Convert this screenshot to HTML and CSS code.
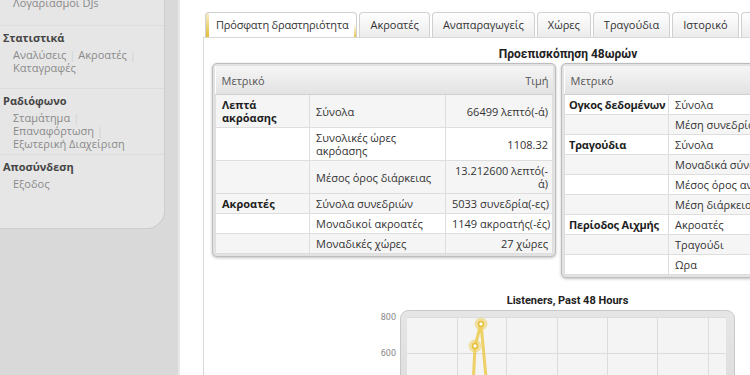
FILE: index.html
```html
<!DOCTYPE html>
<html lang="el">
<head>
	<meta charset="UTF-8">
	<title>Στατιστικά</title>
	<link rel="stylesheet" href="styles.css">
</head>
<body>

	<div class="layout">
		<aside class="sidebar">
			<div class="nav">
				<div class="nav-group spaced first">
					<div class="nav-links"><a>Λογαριασμοί DJs</a></div>
				</div>
				<div class="nav-group spaced">
					<h4>Στατιστικά</h4>
					<div class="nav-links">
						<a>Αναλύσεις</a><span class="sep">|</span><a>Ακροατές</a><span class="sep">|</span><br>
						<a>Καταγραφές</a>
					</div>
				</div>
				<div class="nav-group">
					<h4>Ραδιόφωνο</h4>
					<div class="nav-links">
						<a>Σταμάτημα</a><span class="sep">|</span><br>
						<a>Επαναφόρτωση</a><span class="sep">|</span><br>
						<a>Εξωτερική Διαχείριση</a>
					</div>
				</div>
				<div class="nav-group">
					<h4>Αποσύνδεση</h4>
					<div class="nav-links"><a>Εξοδος</a></div>
				</div>
			</div>
		</aside>

		<main class="main">
			<ul class="tabs">
				<li class="tab active">Πρόσφατη δραστηριότητα</li>
				<li class="tab">Ακροατές</li>
				<li class="tab">Αναπαραγωγείς</li>
				<li class="tab">Χώρες</li>
				<li class="tab">Τραγούδια</li>
				<li class="tab">Ιστορικό</li>
				<li class="tab">Λήψεις</li>
			</ul>

			<div class="tab-panel">
				<h3 class="panel-title">Προεπισκόπηση 48ωρών</h3>

				<div class="stats">
					<div class="stat-box">
						<table>
							<colgroup><col style="width:94px"><col style="width:136px"><col></colgroup>
							<tr><th colspan="2">Μετρικό</th><th class="value">Τιμή</th></tr>
							<tr class="alt"><td class="metric">Λεπτά ακρόασης</td><td>Σύνολα</td><td class="value">66499 λεπτό(-ά)</td></tr>
							<tr><td></td><td>Συνολικές ώρες<br>ακρόασης</td><td class="value">1108.32</td></tr>
							<tr class="alt"><td></td><td>Μέσος όρος διάρκειας</td><td class="value">13.212600 λεπτό(-<br>ά)</td></tr>
							<tr class="alt"><td class="metric">Ακροατές</td><td>Σύνολα συνεδριών</td><td class="value">5033 συνεδρία(-ες)</td></tr>
							<tr><td></td><td>Μοναδικοί ακροατές</td><td class="value">1149 ακροατής(-ές)</td></tr>
							<tr class="alt"><td></td><td>Μοναδικές χώρες</td><td class="value">27 χώρες</td></tr>
						</table>
					</div>

					<div class="stat-box">
						<table class="compact">
							<colgroup><col style="width:104px"><col style="width:150px"><col></colgroup>
							<tr><th colspan="2">Μετρικό</th><th class="value">Τιμή</th></tr>
							<tr><td class="metric">Ογκος δεδομένων</td><td>Σύνολα</td><td class="value">8.41 GB</td></tr>
							<tr class="alt"><td></td><td>Μέση συνεδρία</td><td class="value">1.71 MB</td></tr>
							<tr><td class="metric">Τραγούδια</td><td>Σύνολα</td><td class="value">3120</td></tr>
							<tr class="alt"><td></td><td>Μοναδικά σύνολα</td><td class="value">812</td></tr>
							<tr><td></td><td>Μέσος όρος ανά ώρα</td><td class="value">65</td></tr>
							<tr class="alt"><td></td><td>Μέση διάρκεια</td><td class="value">3:42</td></tr>
							<tr><td class="metric">Περίοδος Αιχμής</td><td>Ακροατές</td><td class="value">763</td></tr>
							<tr class="alt"><td></td><td>Τραγούδι</td><td class="value">-</td></tr>
							<tr><td></td><td>Ωρα</td><td class="value">21:00</td></tr>
						</table>
					</div>
				</div>

				<div class="chart">
					<div class="chart-title">Listeners, Past 48 Hours</div>
					<svg width="370" height="80" viewBox="0 0 370 80">
						<defs>
							<linearGradient id="frame" x1="0" y1="0" x2="0" y2="1">
								<stop offset="0" stop-color="#e6e6e6"/>
								<stop offset="1" stop-color="#d9d9d9"/>
							</linearGradient>
						</defs>
						<rect x="25.5" y="2.5" width="334" height="120" rx="8" fill="url(#frame)" stroke="#c8c8c8"/>
						<rect x="32" y="9" width="319" height="110" fill="#f4f4f4"/>
						<g stroke="#dcdcdc" stroke-width="1">
							<line x1="32" y1="9.5" x2="351" y2="9.5"/>
							<line x1="32" y1="45.5" x2="351" y2="45.5"/>
							<line x1="82.5" y1="9" x2="82.5" y2="80"/>
							<line x1="131.5" y1="9" x2="131.5" y2="80"/>
							<line x1="182.5" y1="9" x2="182.5" y2="80"/>
							<line x1="232.5" y1="9" x2="232.5" y2="80"/>
							<line x1="282.5" y1="9" x2="282.5" y2="80"/>
							<line x1="333.5" y1="9" x2="333.5" y2="80"/>
						</g>
						<g font-family="Roboto, sans-serif" font-size="9" fill="#888" text-anchor="end">
							<text x="21" y="12">800</text>
							<text x="21" y="48">600</text>
						</g>
						<polyline points="98,80 100,38 106,16 112,80" fill="none" stroke="#ecca4c" stroke-width="3" stroke-linejoin="round" opacity="0.85"/>
						<circle cx="100" cy="38" r="6.5" fill="#eed063" opacity="0.55"/>
						<circle cx="106" cy="16" r="6.5" fill="#eed063" opacity="0.55"/>
						<circle cx="100" cy="38" r="2.5" fill="#fff" stroke="#e5bf33" stroke-width="1.5"/>
						<circle cx="106" cy="16" r="2.5" fill="#fff" stroke="#e5bf33" stroke-width="1.5"/>
					</svg>
				</div>
			</div>
		</main>
	</div>

</body>
</html>
```

FILE: styles.css
```css
body {
	margin: 0;
	font-family: "Open Sans", sans-serif;
	height: 375px;
	overflow: hidden;
	background: #fff;
}

.layout {
	display: flex;
	height: 375px;
}

/* sidebar */

.sidebar {
	width: 178px;
	flex-shrink: 0;
	background: #d9d9d9;
	border-right: 2px solid #e8e8e8;
}

.nav {
	width: 164px;
	margin-top: -8px;
	padding-bottom: 34px;
	background: #e6e6e6;
	border-right: 1px solid #cdcdcd;
	border-bottom: 1px solid #cdcdcd;
	border-bottom-right-radius: 18px;
}

.nav-group {
	padding: 4px 0 4px 3px;
	border-bottom: 1px solid #dddddd;
}

.nav-group.spaced {
	padding-bottom: 14px;
}

.nav-group.first {
	padding-bottom: 16px;
}

.nav-group:last-child {
	border-bottom: 0;
}

.nav-group h4 {
	margin: 0 0 2px;
	font-size: 11px;
	line-height: 16px;
	font-weight: bold;
	color: #454545;
}

.nav-links {
	padding-left: 10px;
	font-size: 11px;
	line-height: 13px;
	color: #8a8a8a;
}

.sep {
	color: #d2d2d2;
	margin: 0 3px;
}

/* main */

.main {
	flex: 1;
	min-width: 0;
	padding: 12px 0 0 23px;
	overflow: hidden;
}

.tabs {
	display: flex;
	gap: 2px;
	margin: 0;
	padding: 0 0 0 2px;
	list-style: none;
}

.tab {
	height: 24px;
	line-height: 24px;
	padding: 0 10px;
	border: 1px solid #d0d0d0;
	border-bottom: 0;
	border-radius: 4px 4px 0 0;
	background: linear-gradient(#fefefe, #ececec);
	font-size: 11px;
	color: #333;
	white-space: nowrap;
}

.tab.active {
	padding: 0 8px 0 10px;
	letter-spacing: -0.2px;
	background:
		linear-gradient(#f8efcc, #e3bb38) left / 3px 100% no-repeat,
		linear-gradient(rgba(255,255,255,0) 45%, #e8c758) right / 2px 100% no-repeat,
		#fff;
}

.tab-panel {
	width: 712px;
	padding: 8px 8px 40px;
	border: 1px solid #d8d8d8;
	background: #fff;
}

.panel-title {
	margin: 0;
	text-align: center;
	font: bold 12px/16px Roboto, sans-serif;
	color: #222;
}

.stats {
	display: flex;
	align-items: flex-start;
	gap: 5px;
	margin-top: 1px;
}

.stat-box {
	width: 338px;
	flex-shrink: 0;
	padding: 2px;
	border: 1px solid #bdbdbd;
	border-radius: 5px;
	background: #e2e2e2;
	box-shadow: 0 1px 3px rgba(0, 0, 0, 0.25);
}

table {
	width: 100%;
	border-collapse: collapse;
	table-layout: fixed;
	background: #fff;
	font: 11px/13px "Open Sans", sans-serif;
	color: #333;
}

th {
	height: 28px;
	padding: 0 6px;
	text-align: left;
	font-weight: normal;
	color: #555;
	background: linear-gradient(#f5f5f5, #e3e3e3);
	border-bottom: 1px solid #d0d0d0;
}

td {
	padding: 3px 6px;
	border: 1px solid #dedede;
	vertical-align: middle;
}

tr.alt td {
	background: #f5f5f5;
}

td.metric {
	font-weight: bold;
	color: #1e1e1e;
}

.compact td.metric {
	padding-left: 4px;
	letter-spacing: -0.2px;
}

.value {
	text-align: right;
	white-space: nowrap;
}

td.value,
th.value {
	padding-right: 4px;
}

.compact td {
	white-space: nowrap;
}

/* chart */

.chart {
	width: 370px;
	margin: 16px 0 0 163px;
}

.chart-title {
	width: 335px;
	margin-left: 25px;
	text-align: center;
	font: bold 11px/14px Roboto, sans-serif;
	color: #222;
}

.chart svg {
	display: block;
}
```
